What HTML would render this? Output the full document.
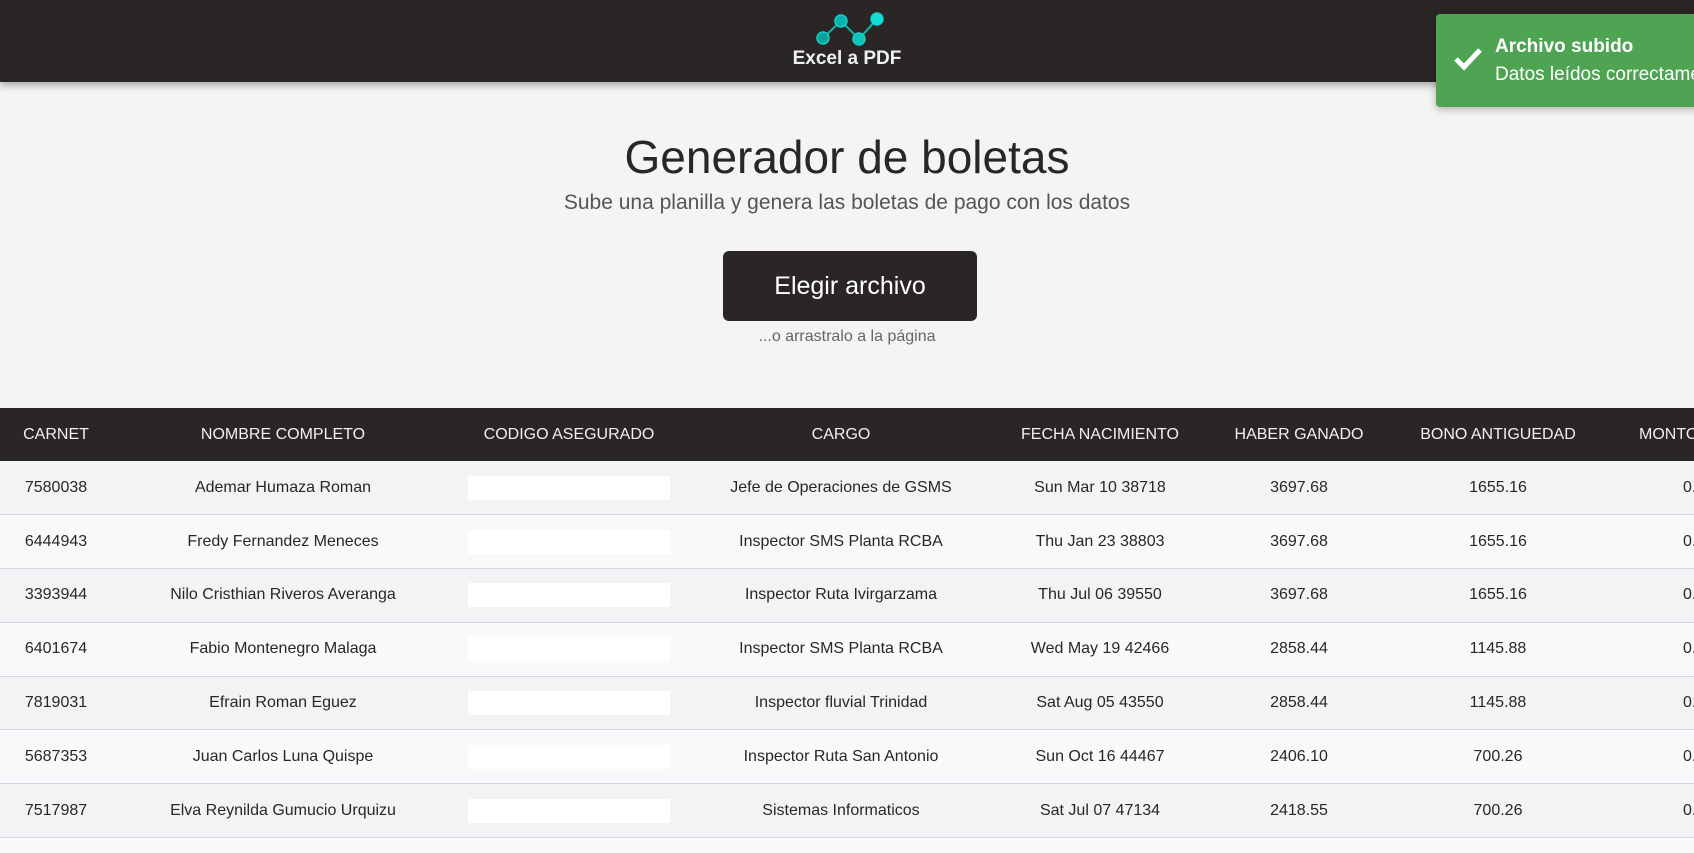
<!DOCTYPE html>
<html><head><meta charset="utf-8"><style>
*{margin:0;padding:0;box-sizing:border-box}
body{width:1694px;height:853px;overflow:hidden;background:#f4f4f2;font-family:"Liberation Sans",sans-serif;position:relative;color:#2a2625}
.nav{position:absolute;left:0;top:0;width:1694px;height:82px;background:#2a2625;box-shadow:0 3px 8px rgba(0,0,0,.35)}
.brand{position:absolute;left:0;width:1694px;top:48px;text-align:center;color:#eef0f6;font-weight:bold;font-size:19px}
h1{position:absolute;left:0;width:1694px;top:130px;text-align:center;font-weight:normal;font-size:46px;color:#2a2625}
.sub{position:absolute;left:0;width:1694px;top:191px;text-align:center;font-size:21px;color:#555}
.btn{position:absolute;left:723px;top:251px;width:254px;height:70px;background:#2a2625;border-radius:6px;color:#fff;font-size:25px;text-align:center;line-height:70px}
.drag{position:absolute;left:0;width:1694px;top:328px;text-align:center;font-size:16px;color:#666}
.wrap{position:absolute;left:0;top:408px;width:1694px;height:445px;overflow:hidden}
table{border-collapse:collapse;width:1900px;table-layout:fixed;font-size:16px}
th{height:53px;background:#2a2625;color:#f0f0f0;font-weight:normal;text-align:center}
td{height:53.8px;text-align:center;border-bottom:1px solid #d5d7dc;color:#2a2625}
tr:nth-child(even) td{background:#f2f3f5}
tr:nth-child(odd) td{background:#f8f9fb}
.m{text-align:left!important;padding-left:83px}
.box{display:inline-block;width:202px;height:24px;background:#fff;vertical-align:middle}
.toast{position:absolute;left:1436px;top:14px;width:270px;height:93px;background:#4fa454;border-radius:4px;box-shadow:0 2px 8px rgba(0,0,0,.3);color:#fff;white-space:nowrap}
.toast b{position:absolute;left:59px;top:22px;font-size:19px}
.toast span{position:absolute;left:59px;top:50px;font-size:19px}
</style></head><body>
<div class="nav">
<svg style="position:absolute;left:810px;top:8px" width="80" height="40" viewBox="810 8 80 40">
<polyline points="823,38 841,21 859,39 877,19" fill="none" stroke="#10b3a8" stroke-width="2"/>
<g stroke="#14d0c6" stroke-width="1.5"><circle cx="823" cy="38" r="6" fill="#0aa39a"/><circle cx="841" cy="21" r="6" fill="#0ab3aa"/><circle cx="859" cy="39" r="6" fill="#0cc4bb"/><circle cx="877" cy="19" r="6" fill="#12dcd3"/></g>
</svg>
<div class="brand">Excel a PDF</div>
</div>
<div class="toast"><svg style="position:absolute;left:17px;top:32px" width="30" height="26" viewBox="0 0 30 26"><path d="M3 13 L11 21 L27 4" fill="none" stroke="#fff" stroke-width="5"/></svg><b>Archivo subido</b><span>Datos leídos correctamente</span></div>
<h1>Generador de boletas</h1>
<div class="sub">Sube una planilla y genera las boletas de pago con los datos</div>
<div class="btn">Elegir archivo</div>
<div class="drag">...o arrastralo a la página</div>
<div class="wrap">
<table>
<colgroup><col style="width:112px"><col style="width:342px"><col style="width:230px"><col style="width:314px"><col style="width:204px"><col style="width:194px"><col style="width:204px"><col style="width:300px"></colgroup>
<tr><th>CARNET</th><th>NOMBRE COMPLETO</th><th>CODIGO ASEGURADO</th><th>CARGO</th><th>FECHA NACIMIENTO</th><th>HABER GANADO</th><th>BONO ANTIGUEDAD</th><th style="text-align:left;padding-left:39px">MONTO</th></tr>
<tr><td>7580038</td><td>Ademar Humaza Roman</td><td><span class="box"></span></td><td>Jefe de Operaciones de GSMS</td><td>Sun Mar 10 38718</td><td>3697.68</td><td>1655.16</td><td class="m">0.00</td></tr>
<tr><td>6444943</td><td>Fredy Fernandez Meneces</td><td><span class="box"></span></td><td>Inspector SMS Planta RCBA</td><td>Thu Jan 23 38803</td><td>3697.68</td><td>1655.16</td><td class="m">0.00</td></tr>
<tr><td>3393944</td><td>Nilo Cristhian Riveros Averanga</td><td><span class="box"></span></td><td>Inspector Ruta Ivirgarzama</td><td>Thu Jul 06 39550</td><td>3697.68</td><td>1655.16</td><td class="m">0.00</td></tr>
<tr><td>6401674</td><td>Fabio Montenegro Malaga</td><td><span class="box"></span></td><td>Inspector SMS Planta RCBA</td><td>Wed May 19 42466</td><td>2858.44</td><td>1145.88</td><td class="m">0.00</td></tr>
<tr><td>7819031</td><td>Efrain Roman Eguez</td><td><span class="box"></span></td><td>Inspector fluvial Trinidad</td><td>Sat Aug 05 43550</td><td>2858.44</td><td>1145.88</td><td class="m">0.00</td></tr>
<tr><td>5687353</td><td>Juan Carlos Luna Quispe</td><td><span class="box"></span></td><td>Inspector Ruta San Antonio</td><td>Sun Oct 16 44467</td><td>2406.10</td><td>700.26</td><td class="m">0.00</td></tr>
<tr><td>7517987</td><td>Elva Reynilda Gumucio Urquizu</td><td><span class="box"></span></td><td>Sistemas Informaticos</td><td>Sat Jul 07 47134</td><td>2418.55</td><td>700.26</td><td class="m">0.00</td></tr>
<tr><td></td><td></td><td></td><td></td><td></td><td></td><td></td><td></td></tr>
</table>
</div>
</body></html>
